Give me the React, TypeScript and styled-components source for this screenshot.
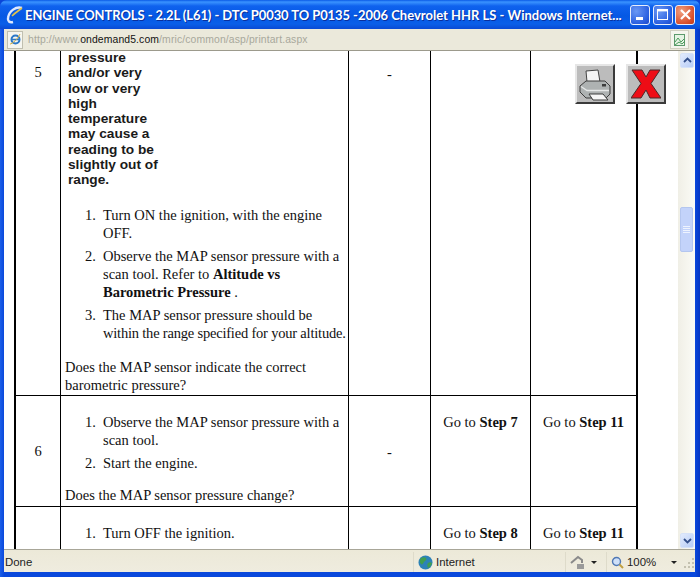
import React from "react";
import styled, { createGlobalStyle } from "styled-components";

const GlobalStyle = createGlobalStyle`
  html, body {
    margin: 0;
    padding: 0;
    width: 700px;
    height: 577px;
    overflow: hidden;
    background: #0a45d8;
  }
`;

const Frame = styled.div`
  width: 700px;
  height: 577px;
  display: flex;
  flex-direction: column;
  box-sizing: border-box;
  padding: 0 5px 5px 4px;
  background: linear-gradient(90deg, #1c5fe8 0, #0a48dc 4px, #0a48dc 695px, #0536c4 700px);
  border-radius: 7px 7px 0 0;
  position: relative;
  overflow: hidden;
`;

const TitleBar = styled.div`
  height: 29px;
  flex: none;
  margin: 0 -5px 0 -4px;
  padding: 0 5px 0 5px;
  display: flex;
  align-items: center;
  background: linear-gradient(180deg, #0a5ae6 0, #3a93ff 2px, #0f62ee 6px, #0558e4 16px, #0a5fe8 24px, #0a4ad4 29px);
`;

const AppIcon = styled.svg`
  width: 20px;
  height: 20px;
  flex: none;
`;

const TitleText = styled.div`
  flex: 1;
  font-family: Lato, sans-serif;
  font-weight: 700;
  font-size: 13px;
  color: #fff;
  text-shadow: 1px 1px 0 #0a2f9c;
  white-space: nowrap;
  overflow: hidden;
`;

const TitleCaps = styled.span`
  letter-spacing: -0.08px;
`;

const TitleRest = styled.span`
  letter-spacing: 0;
`;

const WindowButtons = styled.div`
  display: flex;
  gap: 2.5px;
`;

const WindowButton = styled.div<{ $danger?: boolean }>`
  width: 20px;
  height: 20px;
  box-sizing: border-box;
  border: 1px solid #e8eefc;
  border-radius: 3px;
  display: flex;
  align-items: center;
  justify-content: center;
  background: ${(p) =>
    p.$danger
      ? "radial-gradient(circle at 30% 30%, #f0a080, #d8502c 70%, #c23a18)"
      : "radial-gradient(circle at 30% 30%, #6a98f4, #2a5fe0 70%, #1c48c8)"};
`;

const AddressBar = styled.div`
  height: 22px;
  flex: none;
  display: flex;
  align-items: center;
  box-sizing: border-box;
  background: #ebe9db;
  border-bottom: 1px solid #9c9a8c;
  padding-left: 3px;
  padding-right: 4px;
`;

const PageIconBox = styled.div`
  width: 16px;
  height: 18px;
  flex: none;
  background: #f6f6f0;
  border: 1px solid #c0bfb0;
  box-sizing: border-box;
  display: flex;
  align-items: center;
  justify-content: center;
`;

const Url = styled.div`
  flex: 1;
  margin-left: 5px;
  font-family: "Liberation Sans", sans-serif;
  font-size: 10.4px;
  letter-spacing: 0.12px;
  color: #a8a89c;
  white-space: nowrap;
`;

const UrlHost = styled.span`
  color: #111;
`;

const SecurityIcon = styled.div`
  width: 19px;
  height: 19px;
  flex: none;
  margin-right: 2px;
  background: #f5f5ee;
  border: 1px solid #d2d0c2;
  box-sizing: border-box;
  display: flex;
  align-items: center;
  justify-content: center;
`;

const Viewport = styled.div`
  flex: 1;
  min-height: 0;
  display: flex;
  background: #fff;
  position: relative;
  overflow: hidden;
`;

const PageArea = styled.div`
  flex: 1;
  min-width: 0;
  padding-left: 10px;
  overflow: hidden;
`;

const Scrollbar = styled.div`
  width: 17px;
  flex: none;
  display: flex;
  flex-direction: column;
  background: linear-gradient(90deg, #f0efe6, #fbfbf6);
`;

const ScrollArrow = styled.div`
  height: 15px;
  flex: none;
  margin: 2px 1px 1px 2px;
  box-sizing: border-box;
  background: linear-gradient(135deg, #e2ebfd, #b8cdf6);
  border: 1px solid #d6e2f8;
  border-radius: 2px;
  display: flex;
  align-items: center;
  justify-content: center;
`;

const ScrollTrack = styled.div`
  flex: 1;
  padding-top: 138px;
`;

const ScrollThumb = styled.div`
  height: 45px;
  margin: 0 2px 0 2px;
  box-sizing: border-box;
  background: #c3d3fa;
  border: 1px solid #b4c6ef;
  border-radius: 2px;
  display: flex;
  flex-direction: column;
  align-items: center;
  justify-content: center;
  gap: 1px;
`;

const Grip = styled.div`
  width: 7px;
  height: 1px;
  background: #eef3fe;
`;

const Table = styled.div`
  width: 624px;
  border-left: 2px solid #000;
  border-right: 2px solid #000;
  box-sizing: border-box;
  font-family: "Liberation Serif", serif;
  font-size: 14.5px;
  line-height: 18px;
  color: #111;
`;

const Row = styled.div<{ $height: number; $last?: boolean }>`
  display: grid;
  grid-template-columns: 45px 288px 82px 100px 1fr;
  height: ${(p) => p.$height}px;
  box-sizing: border-box;
  border-bottom: ${(p) => (p.$last ? "0" : "1px solid #000")};
  overflow: hidden;
`;

const Cell = styled.div<{ $center?: boolean; $pad?: number; $noBorder?: boolean }>`
  box-sizing: border-box;
  border-right: ${(p) => (p.$noBorder ? "0" : "1px solid #000")};
  padding-top: ${(p) => p.$pad ?? 0}px;
  text-align: ${(p) => (p.$center ? "center" : "left")};
  min-width: 0;
`;

const StepNote = styled.div`
  font-family: "Liberation Sans", sans-serif;
  font-weight: 700;
  font-size: 13.7px;
  line-height: 15.3px;
  width: 96px;
  margin: -1px 0 18px 7px;
  color: #1a1a1a;
`;

const Steps = styled.ol<{ $after?: number }>`
  margin: 0 -10px ${(p) => p.$after ?? 14}px 0;
  padding: 0 0 0 42px;
`;

const StepItem = styled.li`
  margin-bottom: 5px;
  &::marker {
    content: counter(list-item) ".\\00a0\\00a0";
  }
`;

const TightLine = styled.span`
  letter-spacing: -0.2px;
  white-space: nowrap;
`;

const Question = styled.div`
  padding-left: 4px;
`;

const PrintButtons = styled.div`
  position: absolute;
  top: 13px;
  right: 29px;
  display: flex;
  gap: 11px;
`;

const ActionButton = styled.div`
  width: 40px;
  height: 40px;
  box-sizing: border-box;
  background: #bcbcbc;
  border: 2px solid;
  border-color: #e6e6e6 #3a3a3a #3a3a3a #e6e6e6;
  display: flex;
  align-items: center;
  justify-content: center;
`;

const StatusBar = styled.div`
  height: 23px;
  flex: none;
  display: flex;
  align-items: center;
  box-sizing: border-box;
  border-top: 1px solid #a8a698;
  padding-top: 2px;
  background: linear-gradient(180deg, #ece9d8, #efecdf);
  font-family: "Liberation Sans", sans-serif;
  font-size: 11.4px;
  color: #222;
`;

const StatusText = styled.div`
  flex: 1;
  padding-left: 1px;
`;

const StatusSection = styled.div<{ $width: number }>`
  width: ${(p) => p.$width}px;
  height: 100%;
  flex: none;
  box-sizing: border-box;
  border-left: 1px solid #dedbca;
  display: flex;
  align-items: center;
  gap: 3px;
  padding-left: 4px;
`;

const Caret = styled.span<{ $gap: number }>`
  width: 0;
  height: 0;
  border-left: 3px solid transparent;
  border-right: 3px solid transparent;
  border-top: 3px solid #222;
  margin-left: ${(p) => p.$gap}px;
`;

const ResizeGrip = styled.svg`
  width: 15px;
  height: 16px;
  flex: none;
`;

const Globe = () => (
  <svg width="15" height="15" viewBox="0 0 15 15">
    <circle cx="7.5" cy="7.5" r="7" fill="#2c82b8" />
    <path d="M3 3c2-1 4-1 5 0 1 2-1 3-2 4-1 2-2 3-3 2C2 8 1 5 3 3zM10 8c1-1 3-1 4 0-1 3-2 4-4 5-1-2-1-4 0-5z" fill="#3f9e52" />
  </svg>
);

const Printer = () => (
  <svg width="36" height="36" viewBox="0 0 36 36">
    <path d="M9 5l12-1 2 12H10z" fill="#f4f4f4" stroke="#444" strokeWidth="1" />
    <path d="M3 20l6-5h19l5 5v8l-4 4H9l-6-6z" fill="#aeb2b2" stroke="#3c3c3c" strokeWidth="1" />
    <path d="M4 20.500l6 4h22" fill="none" stroke="#e6e8e8" strokeWidth="1.300" />
    <rect x="25" y="18" width="4" height="2.500" fill="#3c3c3c" />
    <path d="M12 28h14l5 6H16z" fill="#f6f6f6" stroke="#3c3c3c" strokeWidth="1" />
  </svg>
);

const RedX = () => (
  <svg width="30" height="30" viewBox="0 0 30 30">
    <path d="M1 1h10l4 7 4-7h10l-9 13.500 10 14.500H19l-4-8-5 8H0l10-14.500z" fill="#ee0d16" stroke="#4a2a2a" strokeWidth="1" />
  </svg>
);

export default function App() {
  return (
    <>
      <GlobalStyle />
      <Frame>
        <TitleBar>
          <AppIcon viewBox="0 0 20 20">
            <path d="M17 3C11 1 4 6 3 13c-.5 3 1.500 5 5 4" fill="none" stroke="#dfe9ff" strokeWidth="2.400" />
            <path d="M7 11c3-3 6-5 10-8" fill="none" stroke="#e2c34c" strokeWidth="1.600" />
          </AppIcon>
          <TitleText>
            <TitleCaps>ENGINE CONTROLS - 2.2L (L61) - DTC P0030 TO P0135 </TitleCaps>
            <TitleRest>-2006 Chevrolet HHR LS - Windows Internet...</TitleRest>
          </TitleText>
          <WindowButtons>
            <WindowButton>
              <svg width="13" height="13" viewBox="0 0 13 13"><rect x="2" y="9" width="7" height="3" fill="#fff" /></svg>
            </WindowButton>
            <WindowButton>
              <svg width="13" height="13" viewBox="0 0 13 13"><rect x="1.500" y="1.500" width="10" height="10" fill="none" stroke="#fff" /><rect x="1" y="1" width="11" height="2.400" fill="#fff" /></svg>
            </WindowButton>
            <WindowButton $danger>
              <svg width="13" height="13" viewBox="0 0 13 13"><path d="M2 2l9 9M11 2l-9 9" stroke="#fff" strokeWidth="2.200" /></svg>
            </WindowButton>
          </WindowButtons>
        </TitleBar>
        <AddressBar>
          <PageIconBox>
            <svg width="13" height="13" viewBox="0 0 13 13">
              <circle cx="6.500" cy="6.500" r="4" fill="none" stroke="#2b78c8" strokeWidth="2" />
              <path d="M3 6.500h7" stroke="#2b78c8" strokeWidth="1.400" />
              <path d="M1 11c2 0 8-5 10-10" fill="none" stroke="#d8b040" strokeWidth="1" />
            </svg>
          </PageIconBox>
          <Url>
            http://www.<UrlHost>ondemand5.com</UrlHost>/mric/common/asp/printart.aspx
          </Url>
          <SecurityIcon>
            <svg width="14" height="14" viewBox="0 0 14 14">
              <rect x="1.500" y="1.500" width="10" height="11" fill="#e6f3e4" stroke="#5c9a6c" />
              <path d="M2 9l3-4 3 4 3-3M2 12l4-3 3 2 3-3" fill="none" stroke="#4a9a5a" />
            </svg>
          </SecurityIcon>
        </AddressBar>
        <Viewport>
          <PageArea>
            <Table>
              <Row $height={345}>
                <Cell $center $pad={12}>5</Cell>
                <Cell>
                  <StepNote>pressure and/or very low or very high temperature may cause a reading to be slightly out of range.</StepNote>
                  <Steps $after={16}>
                    <StepItem>Turn ON the ignition, with the engine<br />OFF.</StepItem>
                    <StepItem>Observe the MAP sensor pressure with a<br />scan tool. Refer to <b>Altitude vs<br />Barometric Pressure</b> .</StepItem>
                    <StepItem>The MAP sensor pressure should be<br /><TightLine>within the range specified for your altitude.</TightLine></StepItem>
                  </Steps>
                  <Question>Does the MAP sensor indicate the correct barometric pressure?</Question>
                </Cell>
                <Cell $center $pad={14}>-</Cell>
                <Cell />
                <Cell $noBorder />
              </Row>
              <Row $height={111}>
                <Cell $center $pad={46}>6</Cell>
                <Cell $pad={17}>
                  <Steps>
                    <StepItem>Observe the MAP sensor pressure with a<br />scan tool.</StepItem>
                    <StepItem>Start the engine.</StepItem>
                  </Steps>
                  <Question>Does the MAP sensor pressure change?</Question>
                </Cell>
                <Cell $center $pad={47}>-</Cell>
                <Cell $center $pad={17}>Go to <b>Step 7</b></Cell>
                <Cell $center $pad={17} $noBorder>Go to <b>Step 11</b></Cell>
              </Row>
              <Row $height={43} $last>
                <Cell />
                <Cell $pad={17}>
                  <Steps>
                    <StepItem>Turn OFF the ignition.</StepItem>
                  </Steps>
                </Cell>
                <Cell />
                <Cell $center $pad={17}>Go to <b>Step 8</b></Cell>
                <Cell $center $pad={17} $noBorder>Go to <b>Step 11</b></Cell>
              </Row>
            </Table>
          </PageArea>
          <Scrollbar>
            <ScrollArrow>
              <svg width="9" height="7" viewBox="0 0 9 7"><path d="M1 5l3.500-3.500L8 5" fill="none" stroke="#34508c" strokeWidth="1.800" /></svg>
            </ScrollArrow>
            <ScrollTrack>
              <ScrollThumb>
                <Grip /><Grip /><Grip /><Grip />
              </ScrollThumb>
            </ScrollTrack>
            <ScrollArrow>
              <svg width="9" height="7" viewBox="0 0 9 7"><path d="M1 2l3.500 3.500L8 2" fill="none" stroke="#34508c" strokeWidth="1.800" /></svg>
            </ScrollArrow>
          </Scrollbar>
          <PrintButtons>
            <ActionButton><Printer /></ActionButton>
            <ActionButton><RedX /></ActionButton>
          </PrintButtons>
        </Viewport>
        <StatusBar>
          <StatusText>Done</StatusText>
          <StatusSection $width={152}>
            <Globe />
            <span>Internet</span>
          </StatusSection>
          <StatusSection $width={41}>
            <svg width="16" height="15" viewBox="0 0 16 15">
              <path d="M1 8l7-6 4 3v3" fill="none" stroke="#8a8a8a" strokeWidth="2" />
              <rect x="7" y="9" width="7" height="5" fill="#9a9a9a" />
            </svg>
            <Caret $gap={2} />
          </StatusSection>
          <StatusSection $width={74}>
            <svg width="13" height="13" viewBox="0 0 13 13">
              <circle cx="5.500" cy="5.500" r="4" fill="#cfe0f8" stroke="#5078b4" strokeWidth="1.400" />
              <path d="M8.500 8.500l3.500 3.500" stroke="#c0a040" strokeWidth="2" />
            </svg>
            <span>100%</span>
            <Caret $gap={12} />
          </StatusSection>
          <ResizeGrip viewBox="0 0 15 16">
            <path d="M12 4h2v2h-2zM8 8h2v2H8zM12 8h2v2h-2zM4 12h2v2H4zM8 12h2v2H8zM12 12h2v2h-2z" fill="#c4c1b0" />
          </ResizeGrip>
        </StatusBar>
      </Frame>
    </>
  );
}
